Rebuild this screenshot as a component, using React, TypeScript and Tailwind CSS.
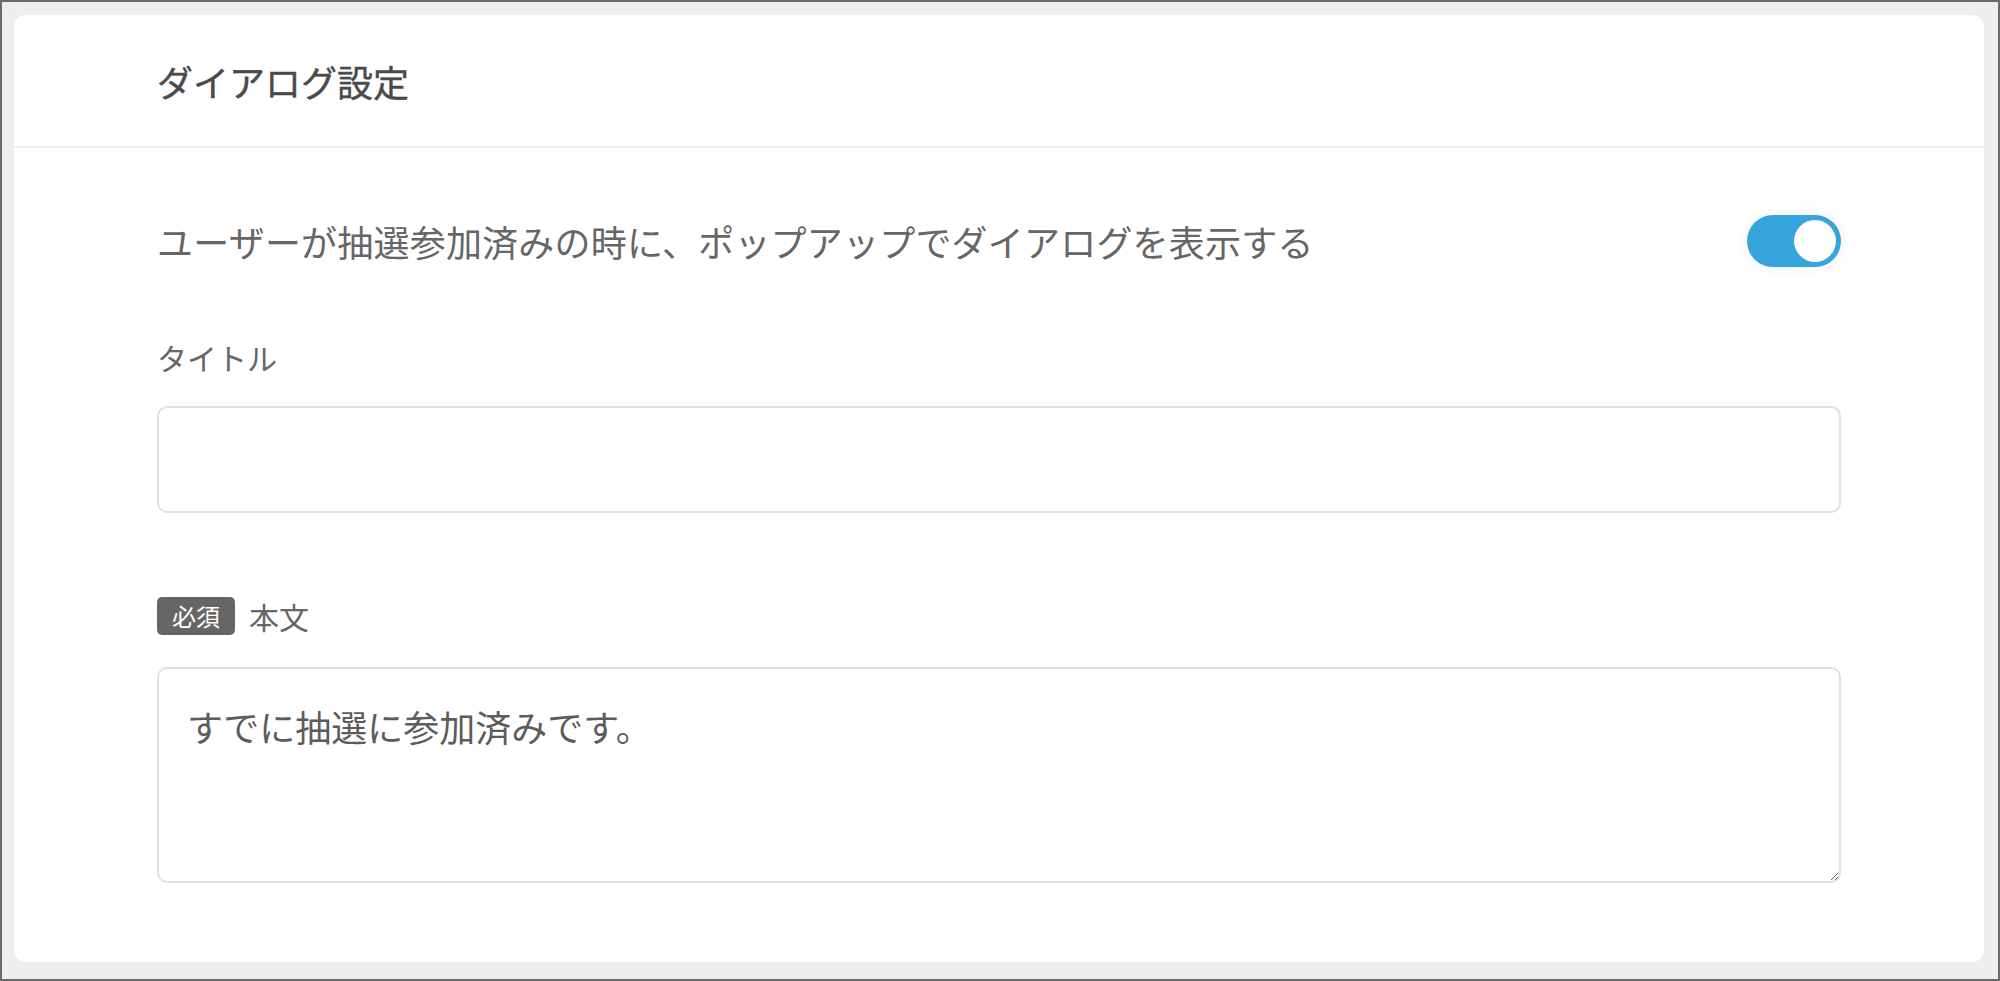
import { useState } from "react";

const font = {
  fontFamily: '"Noto Sans CJK JP", "Noto Sans", sans-serif',
};

function Toggle({ on, onChange }: { on: boolean; onChange: () => void }) {
  return (
    <button
      type="button"
      onClick={onChange}
      className={`flex h-[52px] w-[94px] shrink-0 items-center rounded-full px-[5px] shadow-[0_0_14px_rgba(0,0,0,0.07)] ${
        on ? "justify-end bg-[#36a5dc]" : "justify-start bg-[#d5d7de]"
      }`}
    >
      <span className="block h-[42px] w-[42px] rounded-full bg-white" />
    </button>
  );
}

export default function App() {
  const [show, setShow] = useState(true);
  const [title, setTitle] = useState("");
  const [body, setBody] = useState("すでに抽選に参加済みです。");

  return (
    <div
      style={font}
      className="flex h-[981px] w-full border-2 border-[#6b6b6b] bg-[#eeeeee] pt-[13px] pr-[14px] pb-[17px] pl-[12px]"
    >
      <div className="flex w-full flex-col rounded-[12px] bg-white">
        {/* header */}
        <div className="flex h-[133px] items-center border-b-2 border-[#efefef] px-[143px]">
          <h2 className="text-[36px] leading-none font-normal text-[#4a4a4a] [-webkit-text-stroke:0.4px_#4a4a4a]">
            ダイアログ設定
          </h2>
        </div>

        {/* body */}
        <div className="flex flex-col px-[143px] pt-[67px] pb-[77px] text-[#666666]">
          <div className="flex h-[52px] items-center justify-between">
            <p className="text-[36px] leading-none tracking-[0.2px]">
              ユーザーが抽選参加済みの時に、ポップアップでダイアログを表示する
            </p>
            <Toggle on={show} onChange={() => setShow(!show)} />
          </div>

          <label className="mt-[68px] text-[30px] leading-[45px]">タイトル</label>
          <input
            value={title}
            onChange={(e) => setTitle(e.target.value)}
            className="mt-[26px] h-[107px] w-full rounded-[10px] border-2 border-[#dfe1e8] px-[28px] text-[36px] text-[#555555] outline-none"
          />

          <div className="mt-[84px] flex h-[38px] items-center gap-[14px]">
            <span className="flex h-[38px] w-[78px] items-center justify-center rounded-[5px] bg-[#666666] text-[24px] leading-none text-white">
              必須
            </span>
            <span className="text-[30px] leading-none">本文</span>
          </div>
          <textarea
            value={body}
            onChange={(e) => setBody(e.target.value)}
            className="mt-[32px] h-[216px] w-full resize rounded-[10px] border-2 border-[#dfe1e8] px-[28px] pt-[30px] text-[36px] leading-[54px] text-[#5c5c5c] outline-none"
          />
        </div>
      </div>
    </div>
  );
}
